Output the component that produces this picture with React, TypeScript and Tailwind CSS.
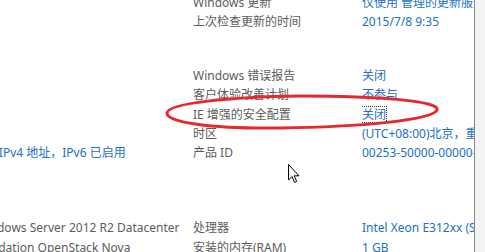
type RowProps = {
  left?: string
  leftClass?: string
  label?: string
  value?: string
  focused?: boolean
}

function Row({ left, leftClass, label, value, focused }: RowProps) {
  return (
    <div className="grid h-[19.4px] grid-cols-[193px_169px_112px] items-center whitespace-nowrap text-[12px] leading-[19.4px]">
      <div className="overflow-hidden">{left && <div className={leftClass}>{left}</div>}</div>
      <div className="overflow-hidden text-[#5c5c5c]">{label}</div>
      <div className="overflow-hidden text-[#2170c4]">
        {focused ? (
          <span className="inline-block leading-[15px] outline outline-1 outline-dotted outline-offset-0 outline-[#333]">
            {value}
          </span>
        ) : (
          value
        )}
      </div>
    </div>
  )
}

export default function App() {
  return (
    <div
      className="relative h-[252px] w-[485px] overflow-hidden bg-white"
      style={{ fontFamily: '"Noto Sans", "Noto Sans CJK SC", sans-serif' }}
    >
      <div className="flex h-full">
        <div className="flex w-[474px] flex-col">
          <div className="mt-[-7px]">
            <Row label="Windows 更新" value="仅使用 管理的更新服务器中的更新" />
            <Row label="上次检查更新的时间" value="2015/7/8 9:35" />
          </div>
          <div className="mt-[34px]">
            <Row label="Windows 错误报告" value="关闭" />
            <Row label="客户体验改善计划" value="不参与" />
            <Row label="IE 增强的安全配置" value="关闭" focused />
            <Row label="时区" value="(UTC+08:00)北京，重庆，香港特别行政区" />
            <Row
              left="由 DHCP 分配的 IPv4 地址，IPv6 已启用"
              leftClass="ml-[-91px] text-[#2170c4]"
              label="产品 ID"
              value="00253-50000-00000-AA442"
            />
          </div>
          <div className="mt-[55.5px]">
            <Row
              left="Microsoft Windows Server 2012 R2 Datacenter"
              leftClass="ml-[-81px] text-[#5c5c5c]"
              label="处理器"
              value="Intel Xeon E312xx (Sandy Bridge)"
            />
            <Row
              left="OpenStack Foundation OpenStack Nova"
              leftClass="ml-[-94px] text-[#5c5c5c]"
              label="安装的内存(RAM)"
              value="1 GB"
            />
          </div>
        </div>
        <div className="w-px bg-[#8a8a8a]" />
        <div className="flex-1 bg-[#f3f3f3]" />
      </div>

      <svg className="pointer-events-none absolute left-0 top-0" width="485" height="252">
        <path
          d="M167 113 C 168 103, 230 97, 300 96 C 380 96, 440 101, 437 110 C 433 120, 360 127, 280 128 C 210 129, 166 122, 167 113 Z"
          fill="none"
          stroke="#e8282e"
          strokeWidth="3"
        />
      </svg>

      <svg className="pointer-events-none absolute left-[288px] top-[164px]" width="13" height="20" viewBox="0 0 13 20">
        <path
          d="M0.5 0.5 L0.5 16 L4 12.5 L6.5 18.5 L8.7 17.5 L6.2 11.8 L11 11.8 Z"
          fill="#fff"
          stroke="#000"
          strokeWidth="1"
        />
      </svg>
    </div>
  )
}
